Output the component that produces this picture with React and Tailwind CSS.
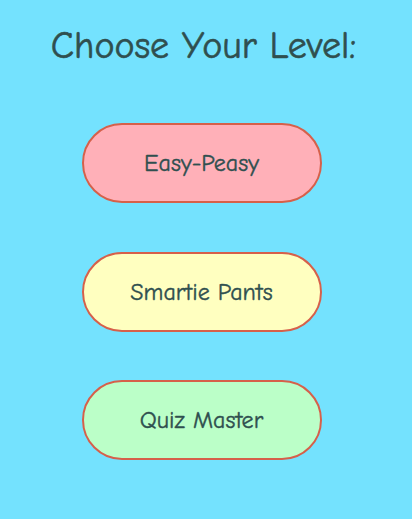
import React from "react";

const levels = [
  { label: "Easy-Peasy", bg: "bg-[#ffb0b8]" },
  { label: "Smartie Pants", bg: "bg-[#ffffc0]" },
  { label: "Quiz Master", bg: "bg-[#bbffc8]" },
];

export default function App() {
  return (
    <div
      className="w-[412px] h-[519px] bg-[#74e2fe] flex flex-col items-center pt-[22px]"
      style={{ fontFamily: '"Comic Sans MS", "Comic Neue", Lato, "Noto Sans", sans-serif' }}
    >
      <h1 className="text-[38px] leading-[48px] text-[#2f4f4f] ml-[-5px] [-webkit-text-stroke:0.6px_#2f4f4f]">Choose Your Level:</h1>
      <div className="flex flex-col gap-[48.5px] mt-[53px] mr-[9px]">
        {levels.map((l) => (
          <button
            key={l.label}
            className={`w-[240px] h-[80px] rounded-[40px] border-2 border-[#d6604a] ${l.bg} text-[24px] text-[#2f4f4f] [-webkit-text-stroke:0.4px_#2f4f4f] flex items-center justify-center`}
          >
            {l.label}
          </button>
        ))}
      </div>
    </div>
  );
}
